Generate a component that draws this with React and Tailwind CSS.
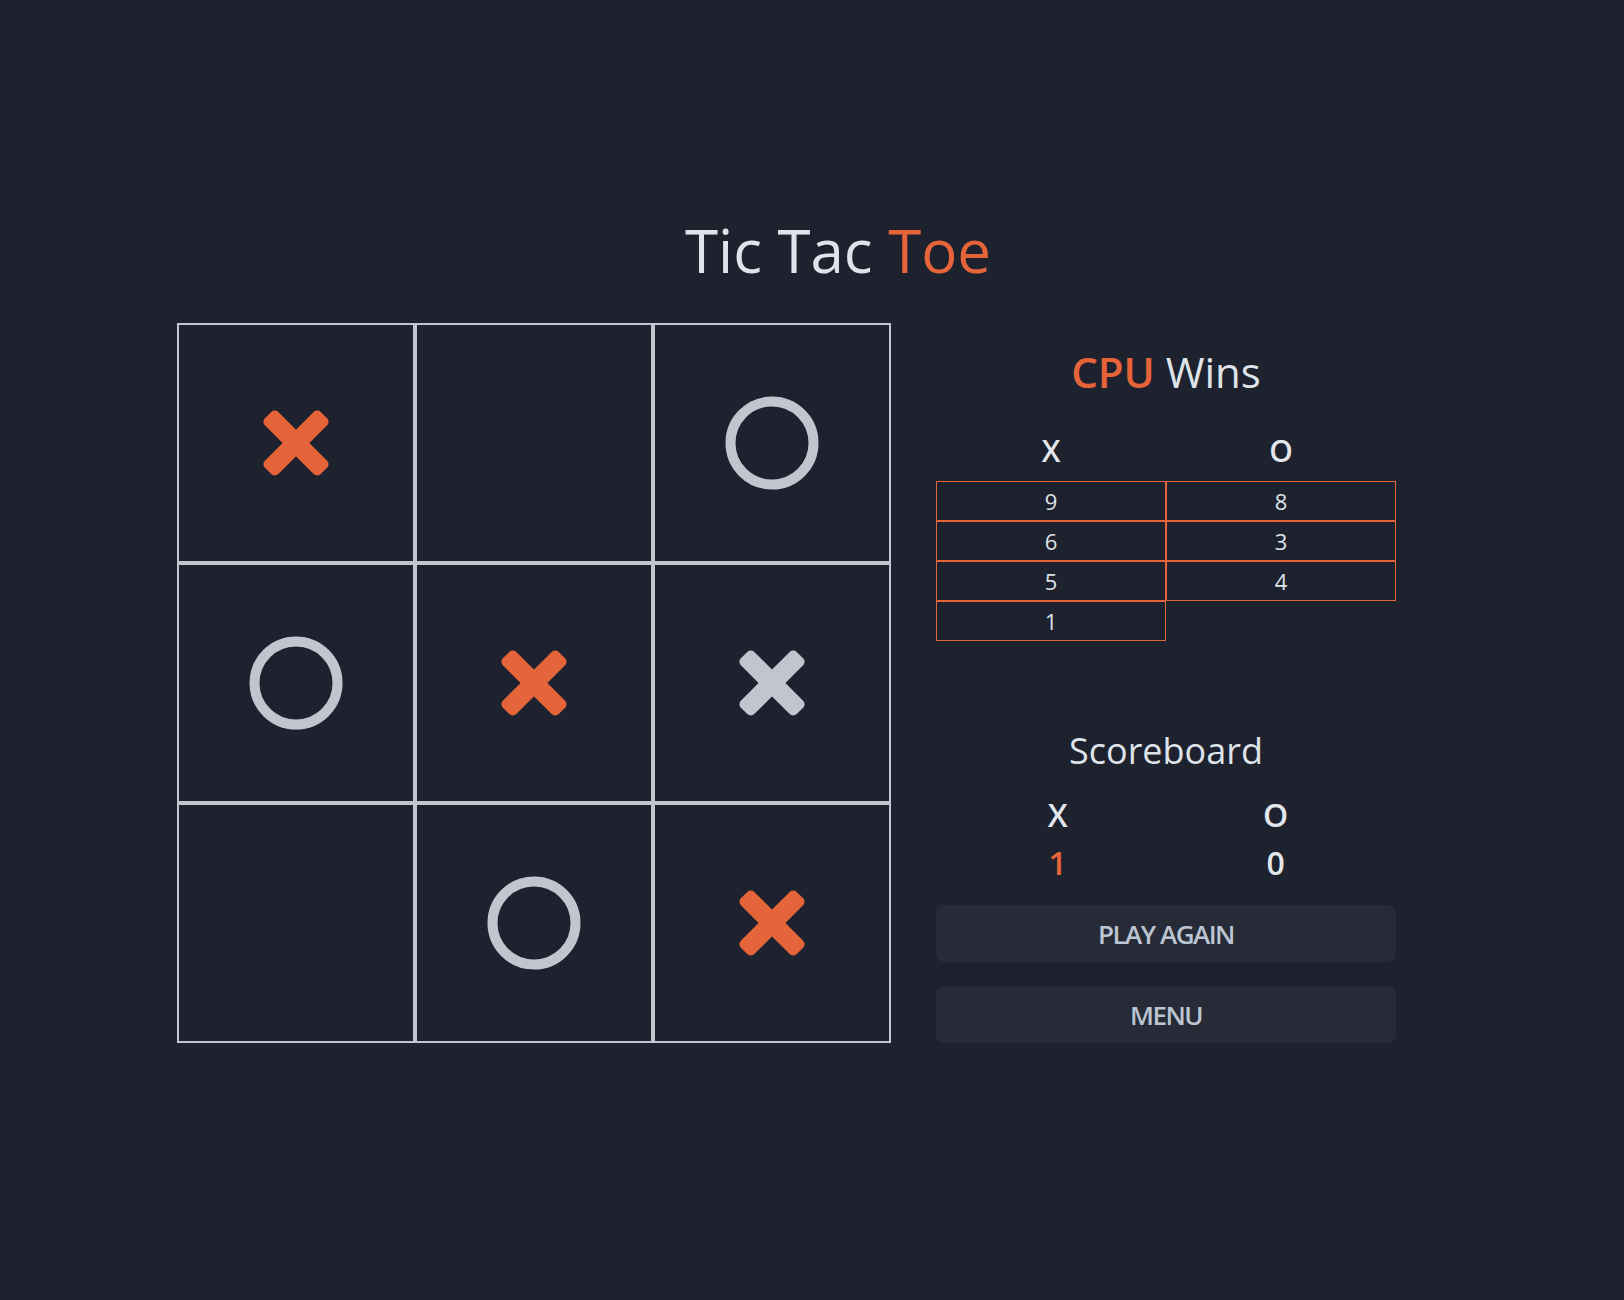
import React from "react";

const ORANGE = "#e6643a";
const LIGHT = "#c0c5cf";

// Board cells, row by row
const board = [
  ["x", "", "o"],
  ["o", "x", "xg"],
  ["", "o", "x"],
];

const cpuWins = {
  x: [9, 6, 5, 1],
  o: [8, 3, 4],
};

function XMark({ color }) {
  return (
    <svg width="70" height="70" viewBox="0 0 70 70">
      <rect x="-4.5" y="25.5" width="79" height="19" rx="5" fill={color} transform="rotate(45 35 35)" />
      <rect x="-4.5" y="25.5" width="79" height="19" rx="5" fill={color} transform="rotate(-45 35 35)" />
    </svg>
  );
}

function OMark() {
  return (
    <svg width="94" height="94" viewBox="0 0 94 94">
      <circle cx="47" cy="47" r="41.5" fill="none" stroke={LIGHT} strokeWidth="10" />
    </svg>
  );
}

function Cell({ value }) {
  return (
    <div className="border-2 border-[#c0c5cf] flex items-center justify-center">
      {value === "x" && <XMark color={ORANGE} />}
      {value === "xg" && <XMark color={LIGHT} />}
      {value === "o" && <OMark />}
    </div>
  );
}

function WinsColumn({ label, values }) {
  return (
    <div className="flex flex-col w-[230px]">
      <div className="h-[30px] leading-none text-[30px] font-semibold text-[#e3e6ec] text-center">
        {label}
      </div>
      <div className="mt-[15px] flex flex-col">
        {values.map((v, i) => (
          <div
            key={i}
            className="h-[40px] border border-[#e6643a] flex items-center justify-center text-[22px] text-[#dfe3ea]"
          >
            {v}
          </div>
        ))}
      </div>
    </div>
  );
}

export default function App() {
  return (
    <div
      className="min-h-screen w-full bg-[#1e222e] pb-[257px]"
      style={{ fontFamily: '"Open Sans", "Noto Sans", sans-serif' }}
    >
      <h1 className="pt-[220px] pl-[52px] h-[280px] text-center text-[60px] leading-none font-normal text-[#dfe3ea]">
        Tic Tac <span className="text-[#e6643a]">Toe</span>
      </h1>

      <div className="mt-[43px] flex pl-[177px] gap-[45px]">
        {/* game board */}
        <div className="grid grid-cols-3 grid-rows-3 w-[714px] h-[720px]">
          {board.flat().map((v, i) => (
            <Cell key={i} value={v} />
          ))}
        </div>

        {/* side panel */}
        <div className="w-[460px] flex flex-col">
          <h2 className="mt-[28px] h-[42px] leading-none text-center text-[42px] text-[#dfe3ea]">
            <span className="font-semibold text-[#e6643a]">CPU</span> Wins
          </h2>

          <div className="mt-[43px] flex items-start">
            <WinsColumn label="X" values={cpuWins.x} />
            <WinsColumn label="O" values={cpuWins.o} />
          </div>

          <h3 className="mt-[92px] h-[36px] leading-none text-center text-[36px] text-[#dfe3ea]">
            Scoreboard
          </h3>

          <div className="mt-[30px] pl-[14px] pr-[10px] flex justify-around text-[32px] leading-none font-semibold">
            <div className="flex flex-col items-center gap-[15.5px]">
              <span className="h-[32px] text-[#e3e6ec]">X</span>
              <span className="h-[32px] text-[#e6643a]">1</span>
            </div>
            <div className="flex flex-col items-center gap-[15.5px]">
              <span className="h-[32px] text-[#e3e6ec]">O</span>
              <span className="h-[32px] text-[#e3e6ec]">0</span>
            </div>
          </div>

          <div className="mt-[26px] flex flex-col gap-[24px]">
            <button
              type="button"
              className="h-[57px] w-full pt-[3px] rounded-lg bg-[#262b37] text-[26px] font-semibold tracking-[-1.5px] text-[#bcc5d2]"
            >
              PLAY AGAIN
            </button>
            <button
              type="button"
              className="h-[57px] w-full pt-[3px] rounded-lg bg-[#262b37] text-[26px] font-semibold tracking-[-1.5px] text-[#bcc5d2]"
            >
              MENU
            </button>
          </div>
        </div>
      </div>
    </div>
  );
}
